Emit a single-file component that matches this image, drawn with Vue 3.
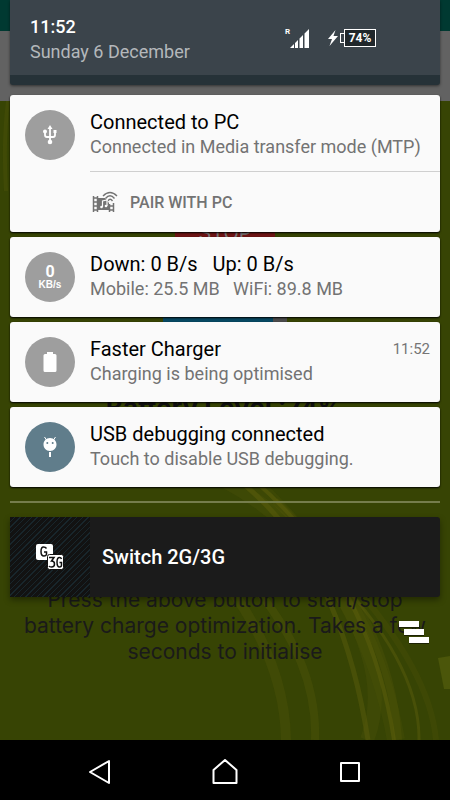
<script setup>
import { ref } from "vue";

const clock = ref("11:52");
const today = ref("Sunday 6 December");
const battery = ref(74);

const notifications = ref([
    {
        id: "usb",
        title: "Connected to PC",
        text: "Connected in Media transfer mode (MTP)",
        action: "PAIR WITH PC",
    },
    {
        id: "speed",
        title: "Down: 0 B/s   Up: 0 B/s",
        text: "Mobile: 25.5 MB   WiFi: 89.8 MB",
    },
    {
        id: "charger",
        title: "Faster Charger",
        text: "Charging is being optimised",
        time: "11:52",
    },
    {
        id: "debug",
        title: "USB debugging connected",
        text: "Touch to disable USB debugging.",
    },
]);

const helpLines = [
    "Press the above button to start/stop",
    "battery charge optimization. Takes a few",
    "seconds to initialise",
];

// Dismiss everything in the shade
function clearAll() {
    notifications.value = [];
}
</script>

<template>
    <div class="phone">
        <div class="stage">
            <!-- App behind the shade -->
            <div class="app">
                <div class="app-status"></div>
                <div class="app-bar"></div>
                <div class="app-body">
                    <svg class="swirls" viewBox="0 0 450 639" preserveAspectRatio="xMaxYMax slice" aria-hidden="true">
                        <g fill="none" stroke="#5a5c0c">
                            <path d="M8 0Q3 40 6 90" stroke-width="4" opacity=".25" />
                            <path d="M225 380Q300 420 345 500T367 639" stroke-width="14" opacity=".22" />
                            <path d="M240 380Q340 460 368 639" stroke-width="5" opacity=".5" />
                            <path d="M255 380Q370 480 394 639" stroke-width="4" opacity=".6" />
                            <path d="M250 380Q370 490 396 639" stroke-width="18" opacity=".18" />
                            <path d="M275 400Q390 510 398 639" stroke-width="8" opacity=".25" />
                            <path d="M325 465Q420 560 419 639" stroke-width="3" opacity=".5" />
                            <path d="M350 480Q430 570 436 639" stroke-width="6" opacity=".2" />
                            <path d="M225 480Q285 560 286 639" stroke-width="10" opacity=".25" />
                            <path d="M250 480Q318 560 315 639" stroke-width="8" opacity=".3" />
                        </g>
                        <path d="M438 557L450 555V588H444Z" fill="#4b560a" />
                    </svg>
                    <div class="app-content">
                        <button type="button" class="stop">STOP</button>
                        <div class="cell"></div>
                        <p class="level">Battery Level :{{ battery }}%</p>
                        <p class="help">
                            <span v-for="line in helpLines" :key="line">{{ line }}</span>
                        </p>
                    </div>
                </div>
            </div>

            <!-- Notification shade -->
            <div class="shade">
                <header class="header">
                    <div>
                        <div class="clock">{{ clock }}</div>
                        <div class="date">{{ today }}</div>
                    </div>
                    <div class="status">
                        <span class="signal">
                            <span class="roaming">R</span>
                            <svg width="20" height="20" viewBox="0 0 20 20" fill="#fff" aria-hidden="true">
                                <path d="M0 20L4 16V20ZM5 15L8 12V20H5ZM9.500 10.500L13 7V20H9.500ZM14.500 5.500L19 1V20H14.500Z" />
                            </svg>
                        </span>
                        <svg width="10" height="16" viewBox="0 0 10 16" fill="#fff" aria-hidden="true">
                            <path d="M7.500 0L0 9H4L1.500 16L10 6H5.500Z" />
                        </svg>
                        <span class="battery">
                            <span class="battery-tip"></span>
                            <span class="battery-body">{{ battery }}%</span>
                        </span>
                    </div>
                </header>

                <main class="list">
                    <article v-for="item in notifications" :key="item.id" class="card">
                        <div class="badge" :class="item.id">
                            <svg v-if="item.id === 'usb'" width="14" height="20" viewBox="0 0 14 20" aria-hidden="true">
                                <g fill="none" stroke="#fff" stroke-width="1.800">
                                    <path d="M7 3V17M2 7V10Q2 12 4 12H10Q12 12 12 10V7" />
                                </g>
                                <path d="M7 0L9.500 4H4.500ZM10.500 5H13.500V8H10.500Z" fill="#fff" />
                                <circle cx="2" cy="6.500" r="2" fill="#fff" />
                                <circle cx="7" cy="17" r="2.300" fill="#fff" />
                            </svg>
                            <template v-else-if="item.id === 'speed'">
                                <span class="rate">0</span>
                                <span class="unit">KB/s</span>
                            </template>
                            <svg v-else-if="item.id === 'charger'" width="14" height="20" viewBox="0 0 14 20" fill="#fff" aria-hidden="true">
                                <path d="M4 0H10V2H12Q13.500 2 13.500 3.500V18.500Q13.500 20 12 20H2Q.500 20 .500 18.500V3.500Q.500 2 2 2H4Z" />
                            </svg>
                            <svg v-else width="14" height="22" viewBox="0 0 14 22" aria-hidden="true">
                                <path d="M1.500 1L3.500 4M12.500 1L10.500 4" stroke="#fff" />
                                <path d="M7 2C11 2 13.500 5 13.500 8.500S11 15 7 15S.500 12 .500 8.500S3 2 7 2ZM6 16H8V21H6Z" fill="#fff" />
                                <circle cx="4.300" cy="7" r="1" fill="#607d8b" />
                                <circle cx="9.700" cy="7" r="1" fill="#607d8b" />
                            </svg>
                        </div>
                        <div class="content">
                            <div class="row">
                                <h2>{{ item.title }}</h2>
                                <time v-if="item.time">{{ item.time }}</time>
                            </div>
                            <p>{{ item.text }}</p>
                            <button v-if="item.action" type="button" class="action">
                                <svg width="28" height="24" viewBox="0 0 28 24" aria-hidden="true">
                                    <g fill="none" stroke="#737373">
                                        <path d="M3.500 6V22M7.500 6V22M19.500 14V22M23.500 13V22" stroke-width="1.500" />
                                        <path d="M3 8H8M3 12H8M3 16H8M3 20H8M19 16H24M19 20H24" stroke-width="1.500" />
                                        <path d="M13 6Q20 -1 27 6M15.500 8.500Q20 3 24.500 8.500M18 11Q20 7.500 22.500 11" stroke-width="1.400" />
                                    </g>
                                    <path d="M8 8H15L19 13V20H8Z" fill="#737373" />
                                    <path d="M12.500 17V11L17 10V16" fill="none" stroke="#fafafa" stroke-width="1.200" />
                                    <circle cx="11.500" cy="17" r="1.300" fill="#fafafa" />
                                    <circle cx="16" cy="16" r="1.300" fill="#fafafa" />
                                </svg>
                                {{ item.action }}
                            </button>
                        </div>
                    </article>
                </main>

                <hr class="divider" />

                <button type="button" class="switch">
                    <span class="switch-icon">
                        <svg width="28" height="26" viewBox="0 0 28 26" aria-hidden="true">
                            <rect width="17" height="16" rx="2" fill="#fff" />
                            <rect x="11.500" y="10.500" width="16" height="15" rx="2" fill="#fff" stroke="#121212" />
                            <g fill="none" stroke="#121212" stroke-width="1.500">
                                <path d="M10.500 4.500Q9.500 3 7.500 3Q5 3 5 7.500Q5 12 8 12Q10 12 10.500 10.500V8H8" />
                                <path d="M13 13.500H18L15.500 17Q18.500 17 18.500 20Q18.500 23 15.500 23Q13.500 23 13 22" />
                                <path d="M25.500 15Q25 13.500 23.500 13.500Q21 13.500 21 18Q21 23 23.500 23Q25.500 23 25.500 21V18.500H23.500" />
                            </g>
                        </svg>
                    </span>
                    <span class="switch-label">Switch 2G/3G</span>
                </button>

                <button type="button" class="clear" aria-label="Clear all" @click="clearAll">
                    <svg width="32" height="24" viewBox="0 0 32 24" aria-hidden="true">
                        <path d="M1 2H21V8H1ZM6 10H26V16H6ZM11 18H31V24H11Z" fill="#1c2204" />
                        <path d="M1 1H21V7H1ZM6 9H26V15H6ZM11 17H31V23H11Z" fill="#fff" />
                    </svg>
                </button>
            </div>
        </div>

        <nav class="nav">
            <button type="button" aria-label="Back">
                <svg width="26" height="26" viewBox="0 0 26 26"><path d="M22 2V24L3 13Z" /></svg>
            </button>
            <button type="button" aria-label="Home">
                <svg width="26" height="26" viewBox="0 0 26 26"><path d="M13 1L24.500 11V24H1.500V11Z" /></svg>
            </button>
            <button type="button" aria-label="Recent apps">
                <svg width="26" height="26" viewBox="0 0 26 26"><path d="M4 4H22V22H4Z" /></svg>
            </button>
        </nav>
    </div>
</template>

<style>
body {
    margin: 0;
    background: #000;
}
</style>

<style scoped>
.phone {
    display: flex;
    flex-direction: column;
    min-height: 100vh;
    font-family: Roboto, "Liberation Sans", sans-serif;
}

button {
    margin: 0;
    padding: 0;
    border: 0;
    background: none;
    font-family: inherit;
    cursor: pointer;
}

h2,
p {
    margin: 0;
    font-weight: 400;
}

.stage {
    display: grid;
    flex: 1;
}

.app,
.shade {
    grid-area: 1 / 1;
    min-width: 0;
}

/* app */
.app {
    display: flex;
    flex-direction: column;
}

.app-status {
    height: 31px;
    background: #003931;
}

.app-bar {
    height: 70px;
    background: #626262;
}

.app-body {
    display: grid;
    flex: 1;
    overflow: hidden;
    background: #374404;
}

.swirls {
    grid-area: 1 / 1;
    width: 100%;
    height: 100%;
    min-height: 0;
}

.app-content {
    grid-area: 1 / 1;
    display: flex;
    flex-direction: column;
    align-items: center;
    padding-top: 92px;
    color: #1a1a1a;
    font-family: Inter, "Liberation Sans", sans-serif;
}

.stop {
    width: 100px;
    height: 80px;
    background: #6e1414;
    color: #777;
    font-size: 20px;
}

.cell {
    width: 110px;
    height: 70px;
    border-right: 14px solid #4b4b4b;
    background: #074862;
}

.level {
    margin-top: 50px;
    color: #101010;
    font-size: 26px;
    font-weight: 700;
    line-height: 30px;
}

.help {
    margin-top: 164px;
    font-size: 21px;
    line-height: 26px;
    text-align: center;
}

.help span {
    display: block;
}

/* shade */
.shade {
    z-index: 1;
    display: flex;
    flex-direction: column;
    padding: 0 10px;
}

.header {
    display: flex;
    justify-content: space-between;
    height: 59px;
    padding: 16px 64px 0 20px;
    border-bottom: 10px solid #263238;
    border-radius: 0 0 3px 3px;
    background: #3b444b;
    box-shadow: 0 1px 3px rgba(0, 0, 0, 0.5);
}

.clock {
    color: #fff;
    font-size: 18px;
    font-weight: 500;
    line-height: 22px;
}

.date {
    color: #b4b8bb;
    font-size: 18px;
    line-height: 28px;
}

.status {
    display: flex;
    align-items: center;
    height: 43px;
}

.signal {
    display: flex;
    margin-right: 18px;
}

.roaming {
    color: #fff;
    font-size: 8px;
    font-weight: 700;
    line-height: 8px;
}

.battery {
    display: flex;
    align-items: center;
    margin-left: 2px;
}

.battery-tip {
    width: 3px;
    height: 8px;
    border: 1px solid #fff;
    border-right: 0;
}

.battery-body {
    width: 30px;
    border: 1px solid #fff;
    background: #20272b;
    color: #fff;
    font-size: 12px;
    font-weight: 700;
    line-height: 16px;
    text-align: center;
}

.list {
    display: flex;
    flex-direction: column;
    gap: 5px;
    margin-top: 10px;
}

.card {
    display: flex;
    min-height: 80px;
    border-radius: 3px;
    background: #fafafa;
    box-shadow: 0 1px 2px #000;
}

.badge {
    display: flex;
    flex: none;
    flex-direction: column;
    align-items: center;
    justify-content: center;
    width: 50px;
    height: 50px;
    margin: 15px;
    border-radius: 50%;
    background: #9e9e9e;
    color: #fff;
    font-weight: 700;
}

.badge.debug {
    background: #607d8b;
}

.rate {
    font-size: 16px;
    line-height: 16px;
}

.unit {
    font-family: "Liberation Sans", sans-serif;
    font-size: 10px;
    line-height: 10px;
}

.content {
    flex: 1;
    min-width: 0;
    padding-top: 14px;
}

.row {
    display: flex;
    align-items: center;
    justify-content: space-between;
    padding-right: 10px;
}

.row h2 {
    color: #000;
    font-size: 20px;
    line-height: 26px;
    white-space: pre-wrap;
}

.row time {
    color: #757575;
    font-size: 15px;
}

.content p {
    color: #737373;
    font-size: 18px;
    line-height: 24px;
    white-space: pre-wrap;
}

.action {
    display: flex;
    align-items: center;
    gap: 12px;
    width: 100%;
    height: 61px;
    margin-top: 12px;
    border-top: 1px solid #cfcfcf;
    color: #737373;
    font-size: 16px;
    font-weight: 500;
}

.divider {
    width: 100%;
    height: 2px;
    margin: 14px 0;
    border: 0;
    background: #757d4c;
}

.switch {
    display: flex;
    align-items: center;
    height: 80px;
    overflow: hidden;
    border-radius: 0 3px 3px 0;
    background: #1b1b1b;
    box-shadow: 0 3px 6px rgba(0, 0, 0, 0.4);
}

.switch-icon {
    display: flex;
    align-items: center;
    justify-content: center;
    width: 80px;
    height: 80px;
    background: repeating-linear-gradient(135deg, #121212 0 3px, #18262c 3px 4px);
}

.switch-label {
    margin-left: 12px;
    color: #fff;
    font-size: 20px;
    font-weight: 500;
}

.clear {
    align-self: flex-end;
    height: 24px;
    margin: 23px 10px 0 0;
}

.clear svg {
    display: block;
}

/* nav bar */
.nav {
    display: flex;
    justify-content: center;
    gap: 99px;
    height: 60px;
    padding-top: 4px;
    box-sizing: border-box;
    background: #000;
}

.nav svg {
    display: block;
    fill: none;
    stroke: #fff;
    stroke-width: 2;
    stroke-linejoin: round;
}
</style>
